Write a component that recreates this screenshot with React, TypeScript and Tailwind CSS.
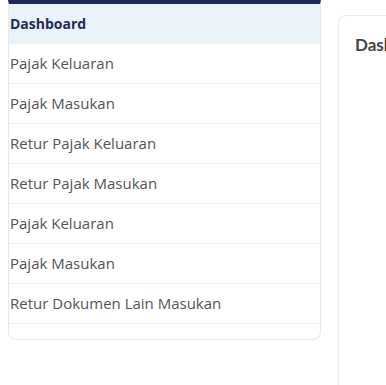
import React from "react";

const items = [
  "Pajak Keluaran",
  "Pajak Masukan",
  "Retur Pajak Keluaran",
  "Retur Pajak Masukan",
  "Pajak Keluaran",
  "Pajak Masukan",
  "Retur Dokumen Lain Masukan",
];

export default function App() {
  return (
    <div className="flex h-[385px] w-[386px] overflow-hidden bg-white">
      <div className="ml-2 w-[313px] shrink-0 self-start">
        <div className="rounded-b-lg border-x border-b border-[#e8e8e8] border-t-4 border-t-[#1c2659] pb-[15px]">
          <div className="flex h-10 items-center border-b border-[#f2f2f2] bg-[#eaf3f8] pl-[1px] font-['Open_Sans',sans-serif] text-[14px] font-bold text-[#1f2a5a]">
            Dashboard
          </div>
          {items.map((t, i) => (
            <div
              key={i}
              className="flex h-10 items-center border-b border-[#f2f2f2] pl-[1px] font-['Open_Sans',sans-serif] text-[15px] text-[#555555]"
            >
              {t}
            </div>
          ))}
        </div>
      </div>
      <div className="ml-[17px] mt-[15px] w-[300px] shrink-0 rounded-tl-lg border-l border-t border-[#ececec] pl-4 pt-[16px]">
        <div className="font-['Lato',sans-serif] text-[17px] font-bold text-[#444444]">Dashboard</div>
      </div>
    </div>
  );
}
